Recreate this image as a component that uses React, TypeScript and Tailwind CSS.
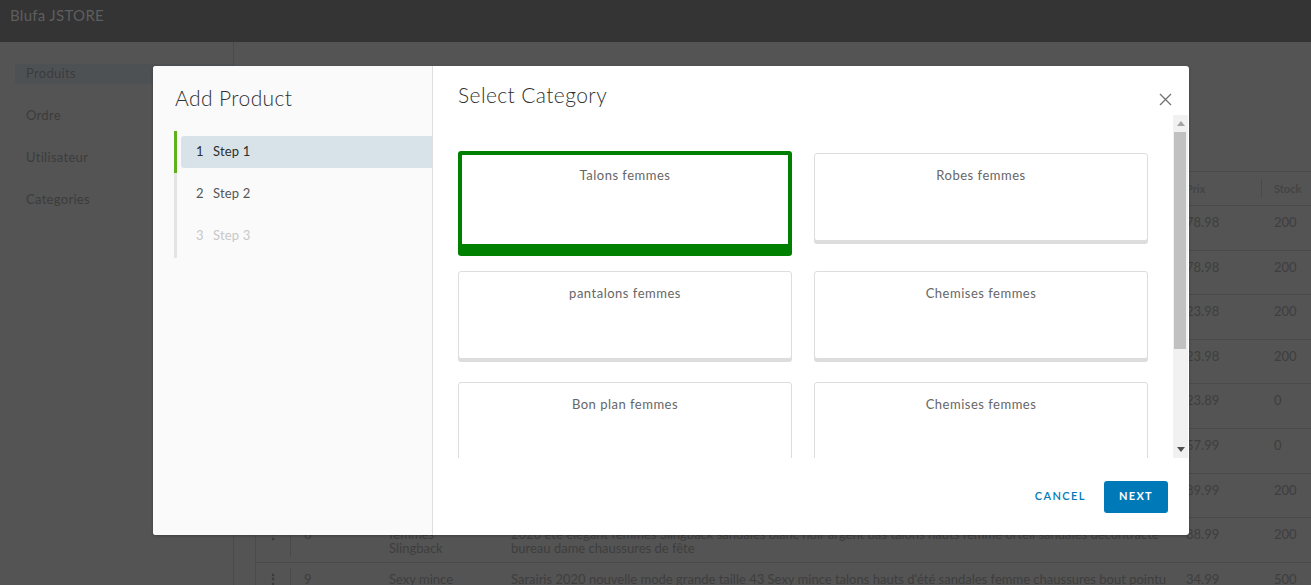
import React from "react";

const menu = ["Produits", "Ordre", "Utilisateur", "Categories"];

const rows = [
  { id: "1", name: "Talons aiguilles", desc: "Talons hauts femme", prix: "78.98", stock: "200" },
  { id: "2", name: "Talons aiguilles", desc: "Talons hauts femme", prix: "78.98", stock: "200" },
  { id: "3", name: "Sandales", desc: "Sandales femme été", prix: "23.98", stock: "200" },
  { id: "4", name: "Sandales", desc: "Sandales femme été", prix: "23.98", stock: "200" },
  { id: "5", name: "Escarpins", desc: "Escarpins femme", prix: "23.89", stock: "0" },
  { id: "6", name: "Bottines", desc: "Bottines femme", prix: "57.99", stock: "0" },
  { id: "7", name: "Mules", desc: "Mules femme", prix: "89.99", stock: "200" },
  {
    id: "8",
    name: ["femmes", "Slingback"],
    desc: [
      "2020 été élégant femmes Slingback sandales blanc noir argent bas talons hauts femme orteil sandales décontracté",
      "bureau dame chaussures de fête",
    ],
    prix: "88.99",
    stock: "200",
  },
  {
    id: "9",
    name: ["Sexy mince"],
    desc: [
      "Sarairis 2020 nouvelle mode grande taille 43 Sexy mince talons hauts d'été sandales femme chaussures bout pointu",
    ],
    prix: "34.99",
    stock: "500",
  },
];

const categories = [
  "Talons femmes",
  "Robes femmes",
  "pantalons femmes",
  "Chemises femmes",
  "Bon plan femmes",
  "Chemises femmes",
];

const steps = [
  { n: "1", label: "Step 1", state: "active" },
  { n: "2", label: "Step 2", state: "next" },
  { n: "3", label: "Step 3", state: "disabled" },
];

function ProductTable() {
  const cols = "grid grid-cols-[35px_85px_122px_675px_89px_80px]";
  return (
    <div className="w-[1086px] border-t border-l border-[#4a4a4a] text-[13px] leading-[14px] text-[#3e3e3e]">
      <div className={`${cols} h-[34px] border-b border-[#4a4a4a] text-[11px] font-bold text-[#444]`}>
        <div className="my-[7px] border-r border-[#4a4a4a]" />
        <div className="my-[7px] border-r border-[#4a4a4a] pl-[13px] leading-[19px]">ID</div>
        <div className="my-[7px] border-r border-[#4a4a4a] pl-[13px] leading-[19px]">Nom</div>
        <div className="my-[7px] border-r border-[#4a4a4a] pl-[13px] leading-[19px]">Description</div>
        <div className="my-[7px] border-r border-[#4a4a4a] pl-[13px] leading-[19px]">Prix</div>
        <div className="my-[7px] pl-[12px] leading-[19px]">Stock</div>
      </div>
      {rows.map((r) => (
        <div key={r.id} className={`${cols} h-[44.6px] border-b border-[#4a4a4a]`}>
          <div className="my-[5px] flex justify-center border-r border-[#4a4a4a] pt-[4px] text-[14px] font-bold text-[#3a3a3a]">
            ⋮
          </div>
          <div className="pl-[13px] pt-[9px]">{r.id}</div>
          <div className="pl-[13px] pt-[9px]">
            {(Array.isArray(r.name) ? r.name : [r.name]).map((l, i) => (
              <div key={i} className="whitespace-nowrap">{l}</div>
            ))}
          </div>
          <div className="overflow-hidden pl-[13px] pt-[9px]">
            {(Array.isArray(r.desc) ? r.desc : [r.desc]).map((l, i) => (
              <div key={i} className="whitespace-nowrap">{l}</div>
            ))}
          </div>
          <div className="pl-[13px] pt-[9px]">{r.prix}</div>
          <div className="pl-[12px] pt-[9px]">{r.stock}</div>
        </div>
      ))}
    </div>
  );
}

function Wizard() {
  return (
    <div className="absolute left-[153px] top-[66px] flex h-[469px] w-[1036px] overflow-hidden rounded-[3px] bg-white shadow-[0_1px_3px_rgba(0,0,0,0.25)]">
      <div className="w-[280px] shrink-0 border-r border-[#dedede] bg-[#fafafa]">
        <h1 className="pl-[22px] pt-[20px] text-[21px] font-light leading-[24px] tracking-[0.4px] text-[#313131]">
          Add Product
        </h1>
        <div className="ml-[21px] mt-[21px]">
          {steps.map((s) => (
            <div
              key={s.n}
              className={`border-l-[3px] pl-[4px] ${
                s.state === "active" ? "border-[#5fb31a]" : "border-[#e4e4e4]"
              } ${s.n === "3" ? "pb-[6px] pt-[5px]" : "py-[5px]"}`}
            >
              <div
                className={`flex h-[32px] items-center rounded-l-[3px] pl-[15px] text-[13px] tracking-[0.2px] ${
                  s.state === "active"
                    ? "bg-[#d8e3e9] text-[#2d2d2d]"
                    : s.state === "next"
                    ? "text-[#565656]"
                    : "text-[#c8c8c8]"
                }`}
              >
                <span className="w-[17px]">{s.n}</span>
                <span>{s.label}</span>
              </div>
            </div>
          ))}
        </div>
      </div>

      <div className="flex flex-1 flex-col">
        <div className="flex h-[49px] items-start justify-between pl-[25px] pr-[17px] pt-[17px]">
          <h2 className="text-[21px] font-light leading-[24px] tracking-[0.4px] text-[#313131]">
            Select Category
          </h2>
          <button className="mt-[10px] text-[#747474]">
            <svg width="13" height="13" viewBox="0 0 13 13" fill="none" stroke="currentColor" strokeWidth="1.4">
              <path d="M1 1L12 12M12 1L1 12" />
            </svg>
          </button>
        </div>

        <div className="flex h-[343px] pr-[1px]">
          <div className="flex-1 overflow-hidden pl-[25px] pr-[25px] pt-[38px]">
            <div className="grid grid-cols-2 items-start gap-x-[22px] gap-y-[23px]">
              {categories.map((c, i) =>
                i === 0 ? (
                  <div
                    key={i}
                    className="-mt-[2px] h-[97px] rounded-[3px] border-4 border-[#008000] bg-white pt-[11px] text-center text-[13px] leading-[18px] tracking-[0.5px] text-[#666] shadow-[0_8px_0_0_#008000]"
                  >
                    {c}
                  </div>
                ) : (
                  <div
                    key={i}
                    className="h-[88px] rounded-[3px] border border-[#dddddd] bg-white pt-[12px] text-center text-[13px] leading-[18px] tracking-[0.5px] text-[#666] shadow-[0_3px_0_0_#dddddd]"
                  >
                    {c}
                  </div>
                )
              )}
            </div>
          </div>
          <div className="flex w-[15px] flex-col bg-[#f1f1f1]">
            <div className="flex h-[17px] items-center justify-center">
              <svg width="8" height="5" viewBox="0 0 8 5">
                <path d="M0 5L4 0L8 5Z" fill="#a3a3a3" />
              </svg>
            </div>
            <div className="ml-[1px] mr-[2px] h-[217px] bg-[#c1c1c1]" />
            <div className="flex-1" />
            <div className="flex h-[17px] items-center justify-center">
              <svg width="8" height="5" viewBox="0 0 8 5">
                <path d="M0 0L8 0L4 5Z" fill="#505050" />
              </svg>
            </div>
          </div>
        </div>

        <div className="flex flex-1 items-center justify-end gap-[18px] pr-[21px]">
          <button className="text-[11px] font-semibold tracking-[0.13em] text-[#0079b8]">CANCEL</button>
          <button className="h-[32px] rounded-[3px] bg-[#0079b8] px-[15px] text-[11px] font-bold tracking-[0.12em] text-white">
            NEXT
          </button>
        </div>
      </div>
    </div>
  );
}

export default function App() {
  return (
    <div className="relative h-[585px] w-[1311px] overflow-hidden bg-[#545454] [font-family:Lato,'Liberation_Sans',sans-serif]">
      <header className="flex h-[42px] items-start bg-[#343434] pl-[10px] pt-[5px] text-[15px] leading-[20px] tracking-[0.3px] text-[#5e5e5e]">
        Blufa JSTORE
      </header>
      <div className="flex h-[543px]">
        <aside className="w-[234px] shrink-0 border-r border-[#4b4b4b] pl-[15px] pt-[22px]">
          <nav className="flex flex-col gap-[22px]">
            {menu.map((m, i) => (
              <div
                key={m}
                className={`h-[20px] pl-[11px] text-[13px] leading-[19px] tracking-[0.3px] text-[#3c3c3c] ${
                  i === 0 ? "bg-[#4e5154]" : ""
                }`}
              >
                {m}
              </div>
            ))}
          </nav>
        </aside>
        <main className="flex-1 overflow-hidden pl-[21px] pt-[129px]">
          <ProductTable />
        </main>
      </div>
      <Wizard />
    </div>
  );
}
